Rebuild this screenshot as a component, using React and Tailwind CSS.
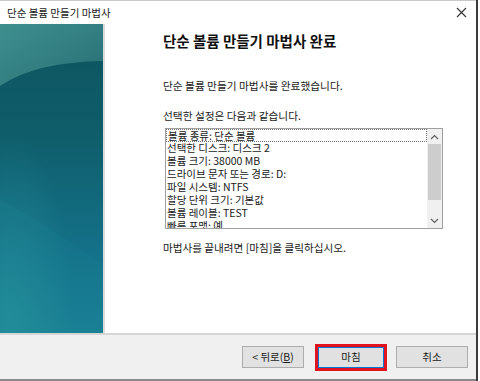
import React from "react";

const FONT = { fontFamily: '"Noto Sans CJK KR", "Noto Sans", sans-serif' };

function PanelArt() {
  return (
    <svg width="103" height="309" viewBox="0 0 103 309" className="block">
      <defs>
        <linearGradient id="wizPanelMain" x1="0" y1="0" x2="0" y2="1">
          <stop offset="0" stopColor="#0c545e" />
          <stop offset="0.35" stopColor="#0f5d6a" />
          <stop offset="0.75" stopColor="#14728a" />
          <stop offset="1" stopColor="#197f94" />
        </linearGradient>
        <radialGradient id="wizPanelGlow" cx="10%" cy="95%" r="60%">
          <stop offset="0" stopColor="#2a9aa0" stopOpacity="0.5" />
          <stop offset="1" stopColor="#2a9aa0" stopOpacity="0" />
        </radialGradient>
        <linearGradient id="wizPanelTop" x1="0" y1="0" x2="1" y2="1">
          <stop offset="0" stopColor="#3f8f8f" />
          <stop offset="1" stopColor="#276f74" />
        </linearGradient>
      </defs>
      <rect x="0" y="0" width="103" height="309" fill="#0f5f6c" />
      <rect x="0" y="0" width="103" height="309" fill="url(#wizPanelMain)" />
      <rect x="0" y="0" width="103" height="309" fill="url(#wizPanelGlow)" />
      <path d="M0 62 Q 35 38 103 37 L103 0 L0 0 Z" fill="url(#wizPanelTop)" />
      <path d="M0 175 Q 45 200 103 240 L103 309 L0 309 Z" fill="#2a95a0" opacity="0.1" />
    </svg>
  );
}

function Chevron({ up }) {
  return (
    <svg width="9" height="6" viewBox="0 0 9 6">
      <path d={up ? "M1 5 L4.5 1.5 L8 5" : "M1 1 L4.5 4.5 L8 1"} fill="none" stroke="#606060" strokeWidth="1.2" />
    </svg>
  );
}

const items = [
  "볼륨 종류: 단순 볼륨",
  "선택한 디스크: 디스크 2",
  "볼륨 크기: 38000 MB",
  "드라이브 문자 또는 경로: D:",
  "파일 시스템: NTFS",
  "할당 단위 크기: 기본값",
  "볼륨 레이블: TEST",
  "빠른 포맷: 예",
];

export default function App() {
  return (
    <div className="w-[480px] h-[381px] bg-white overflow-hidden" style={FONT}>
      <div className="w-[478px] h-[381px] flex flex-col border-r-2 border-r-[#3a3a3a]">
        {/* Title bar */}
        <div className="h-[24px] shrink-0 flex items-center justify-between pl-[7px] pr-[9px] border-t border-t-[#c8c8c8] bg-white">
          <span className="text-[10.5px] leading-[14px] text-[#1a1a1a]">단순 볼륨 만들기 마법사</span>
          <svg width="11" height="11" viewBox="0 0 11 11">
            <path d="M1 1 L10 10 M10 1 L1 10" stroke="#333" strokeWidth="1.1" />
          </svg>
        </div>
        {/* Body */}
        <div className="h-[309px] shrink-0 flex">
          <div className="w-[103px] h-[309px] shrink-0 bg-[#0f5f6c]">
            <PanelArt />
          </div>
          <div className="w-[2px] h-full bg-[#dcdcdc]" />
          <div className="flex-1 pl-[58px] pt-[8px] flex flex-col">
            <div className="text-[14.5px] font-bold leading-[18px] text-[#111]">단순 볼륨 만들기 마법사 완료</div>
            <div className="mt-[29px] text-[10.7px] leading-[14px] text-[#1a1a1a]">단순 볼륨 만들기 마법사를 완료했습니다.</div>
            <div className="mt-[16px] text-[10.7px] leading-[14px] text-[#1a1a1a]">선택한 설정은 다음과 같습니다.</div>
            <div className="mt-[5px] ml-[2px] w-[278px] h-[101px] border border-[#a0a0a0] flex bg-white overflow-hidden">
              <div className="flex-1 flex flex-col overflow-hidden">
                {items.map((t, i) => (
                  <div
                    key={i}
                    className={
                      "h-[13px] shrink-0 pl-[1px] text-[10.5px] leading-[12px] text-[#1a1a1a] whitespace-nowrap " +
                      (i === 0 ? "border border-dotted border-[#777] leading-[10px]" : "")
                    }
                  >
                    {t}
                  </div>
                ))}
              </div>
              <div className="w-[15px] h-full bg-[#f0f0f0] flex flex-col items-center">
                <div className="h-[15px] flex items-center justify-center">
                  <Chevron up />
                </div>
                <div className="w-[13px] h-[56px] bg-[#cdcdcd]" />
                <div className="flex-1" />
                <div className="h-[15px] flex items-center justify-center">
                  <Chevron />
                </div>
              </div>
            </div>
            <div className="mt-[12px] text-[10.6px] leading-[14px] text-[#1a1a1a]">마법사를 끝내려면 [마침]을 클릭하십시오.</div>
          </div>
        </div>
        {/* Bottom bar */}
        <div className="h-[2px] shrink-0 bg-[#d6d6d6]" />
        <div className="h-[44px] shrink-0 bg-[#f0f0f0] flex items-center pl-[242px]">
          <button className="w-[62px] h-[22px] bg-[#e1e1e1] border border-[#adadad] text-[10.5px] leading-none text-[#1a1a1a]">
            &lt; 뒤로(<span className="underline">B</span>)
          </button>
          <div className="ml-[11px] w-[72px] h-[27px] border-[3px] border-[#e0141e] flex">
            <button className="flex-1 bg-[#e1e1e1] border border-[#0078d7] text-[10.5px] leading-none text-[#1a1a1a]">마침</button>
          </div>
          <button className="ml-[9px] w-[72px] h-[22px] bg-[#e1e1e1] border border-[#adadad] text-[10.5px] leading-none text-[#1a1a1a]">
            취소
          </button>
        </div>
        <div className="h-[2px] shrink-0 bg-[#8a8a8a]" />
      </div>
    </div>
  );
}
